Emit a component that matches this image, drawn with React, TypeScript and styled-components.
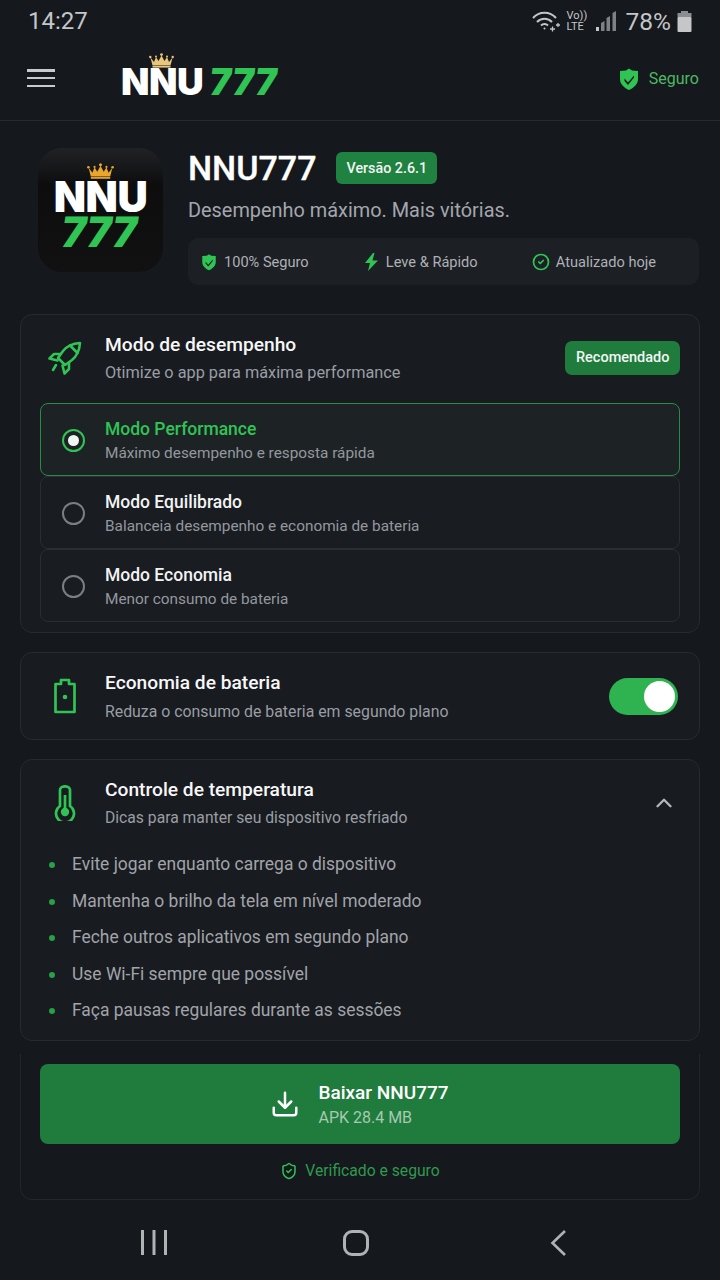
import React from 'react';
import styled, { createGlobalStyle } from 'styled-components';
import { CircleCheck, ChevronUp, Download, ShieldCheck } from 'lucide-react';

const GREEN = '#30c455';

const GlobalStyle = createGlobalStyle`
    html, body {
        margin: 0;
        padding: 0;
        background: #15181d;
    }
    * {
        box-sizing: border-box;
    }
`;

const Crown: React.FC<{ width: number; color: string }> = ({ width, color }) => (
    <svg width={width} height={width * 0.6} viewBox="0 0 25 15" fill={color}>
        <circle cx="12.5" cy="1.6" r="1.4" />
        <circle cx="1.3" cy="4" r="1.2" />
        <circle cx="23.7" cy="4" r="1.2" />
        <circle cx="7" cy="3.6" r="1" />
        <circle cx="18" cy="3.6" r="1" />
        <path d="M1.5 4.5 L5 9 L7 4 L9.5 8 L12.5 2.5 L15.5 8 L18 4 L20 9 L23.5 4.5 L21.5 12.5 H3.5 Z" />
        <rect x="3.5" y="13" width="18" height="1.6" />
    </svg>
);

const ShieldSolid: React.FC<{ size: number }> = ({ size }) => (
    <svg width={size} height={size} viewBox="0 0 24 24">
        <path d="M12 1.5 L15 3.6 L21 4 V12 C21 17.5 16.5 21 12 23 C7.5 21 3 17.5 3 12 V4 L9 3.6 Z" fill={GREEN} />
        <path d="M7.5 11.5 L11 15.5 L17 8.5 L17 10.5 L11 18 L7.5 14 Z" fill="#15181d" />
    </svg>
);

const modes = [
    { title: 'Modo Performance', desc: 'Máximo desempenho e resposta rápida', active: true },
    { title: 'Modo Equilibrado', desc: 'Balanceia desempenho e economia de bateria', active: false },
    { title: 'Modo Economia', desc: 'Menor consumo de bateria', active: false },
];

const tips = [
    'Evite jogar enquanto carrega o dispositivo',
    'Mantenha o brilho da tela em nível moderado',
    'Feche outros aplicativos em segundo plano',
    'Use Wi-Fi sempre que possível',
    'Faça pausas regulares durante as sessões',
];

const App: React.FC = () => {
    return (
        <Page>
            <GlobalStyle />
            <StatusBar>
                <Clock>14:27</Clock>
                <StatusRight>
                    <svg width="30" height="22" viewBox="0 0 30 22" fill="none" stroke="#c4c6c8" strokeWidth="2">
                        <path d="M2 8 C8 1 19 1 25 8" />
                        <path d="M6 12 C10 7.5 17 7.5 21 12" />
                        <path d="M10 15.5 C12 13.5 15 13.5 17 15.5" />
                        <circle cx="13.5" cy="18.5" r="1" fill="#c4c6c8" stroke="none" />
                        <path d="M19 19 h5 M21.5 16.5 v5 M25 15 h4 M27 13 v4" strokeWidth="1.3" />
                    </svg>
                    <VolteLabel>Vo))<br />LTE</VolteLabel>
                    <svg width="22" height="20" viewBox="0 0 22 20" fill="#7f8285">
                        <rect x="1" y="16" width="3" height="4" fill="#c4c6c8" />
                        <path d="M6 12 L9.5 10 V20 H6 Z" />
                        <path d="M11.5 7 L15 5 V20 H11.5 Z" />
                        <path d="M17.5 2 L21 0 V20 H17.5 Z" />
                    </svg>
                    <Percent>78%</Percent>
                    <svg width="15" height="21" viewBox="0 0 15 21">
                        <rect x="4" y="0" width="7" height="3" fill="#8b8e91" />
                        <rect x="0.5" y="2" width="14" height="4" fill="#8b8e91" />
                        <rect x="0.5" y="6" width="14" height="15" rx="1" fill="#c4c6c8" />
                    </svg>
                </StatusRight>
            </StatusBar>

            <Header>
                <Burger><span /><span /><span /></Burger>
                <HeaderLogo>
                    <CrownSpot><Crown width={25} color="#e9c67c" /></CrownSpot>
                    <LogoWhite>NNU</LogoWhite><LogoGreen>777</LogoGreen>
                </HeaderLogo>
                <SafeTag>
                    <ShieldSolid size={24} />
                    <span>Seguro</span>
                </SafeTag>
            </Header>

            <Hero>
                <AppIcon>
                    <Crown width={27} color="#e9a62c" />
                    <IconWhite>NNU</IconWhite>
                    <IconGreen>777</IconGreen>
                </AppIcon>
                <HeroBody>
                    <TitleRow>
                        <AppTitle>NNU777</AppTitle>
                        <Pill>Versão 2.6.1</Pill>
                    </TitleRow>
                    <Tagline>Desempenho máximo. Mais vitórias.</Tagline>
                    <Features>
                        <Feature><ShieldSolid size={18} />100% Seguro</Feature>
                        <Feature>
                            <svg width="17" height="18" viewBox="0 0 17 18" fill={GREEN}>
                                <path d="M10 0 L2 10 H7 L5 18 L15 7.5 H9.5 L11.5 0 Z" />
                            </svg>
                            Leve &amp; Rápido
                        </Feature>
                        <Feature><CircleCheck size={18} color={GREEN} strokeWidth={2.3} />Atualizado hoje</Feature>
                    </Features>
                </HeroBody>
            </Hero>

            <Stack>
                <ModeCard>
                    <ModeHead>
                        <IconSlot>
                            <svg width="34" height="34" viewBox="0 0 34 34" fill="none" stroke={GREEN} strokeWidth="2.6" strokeLinejoin="round" strokeLinecap="round">
                                <path d="M32 2 C25 2.5 19 5 15 10 L10 17 L17 24 L24 19 C29 15 31.5 9 32 2 Z" />
                                <path d="M22 4.5 L29.5 12" />
                                <path d="M12.5 13 H6 L1.5 17.5 L9.5 19.5" />
                                <path d="M21 21.5 V28 L16.5 32.5 L14.5 24.5" />
                                <path d="M8 24 L5 29" />
                            </svg>
                        </IconSlot>
                        <HeadText>
                            <CardTitle>Modo de desempenho</CardTitle>
                            <ModeHeadDesc>Otimize o app para máxima performance</ModeHeadDesc>
                        </HeadText>
                        <Recommended>Recomendado</Recommended>
                    </ModeHead>
                    <ModeList>
                        {modes.map((mode) => (
                            <ModeRow key={mode.title} $active={mode.active}>
                                <Radio $active={mode.active} />
                                <div>
                                    <ModeTitle $active={mode.active}>{mode.title}</ModeTitle>
                                    <ModeDesc>{mode.desc}</ModeDesc>
                                </div>
                            </ModeRow>
                        ))}
                    </ModeList>
                </ModeCard>

                <BatteryCard>
                    <IconSlot>
                        <svg width="24" height="36" viewBox="0 0 24 36" fill="none" stroke={GREEN} strokeWidth="2.7" strokeLinejoin="round">
                            <path d="M2.5 6 H8 V2 H16 V6 H21.5 V34 H2.5 Z" />
                            <circle cx="12" cy="19" r="2.3" fill={GREEN} stroke="none" />
                        </svg>
                    </IconSlot>
                    <HeadText>
                        <CardTitle>Economia de bateria</CardTitle>
                        <BatteryDesc>Reduza o consumo de bateria em segundo plano</BatteryDesc>
                    </HeadText>
                    <Toggle><Knob /></Toggle>
                </BatteryCard>

                <TempCard>
                    <TempHead>
                        <IconSlot>
                            <svg width="24" height="36" viewBox="0 0 24 36" fill="none" stroke={GREEN} strokeWidth="2.7">
                                <path d="M7 5 a5 3.7 0 0 1 10 0 V21 a9 9 0 1 1 -10 0 Z" />
                                <path d="M12 10 V26" />
                                <circle cx="12" cy="27" r="4.2" fill={GREEN} stroke="none" />
                            </svg>
                        </IconSlot>
                        <HeadText>
                            <CardTitle>Controle de temperatura</CardTitle>
                            <TempDesc>Dicas para manter seu dispositivo resfriado</TempDesc>
                        </HeadText>
                        <ChevronSlot><ChevronUp size={26} color="#b4b6b9" strokeWidth={2.2} /></ChevronSlot>
                    </TempHead>
                    <TipList>
                        {tips.map((tip) => (
                            <Tip key={tip}>{tip}</Tip>
                        ))}
                    </TipList>
                </TempCard>
            </Stack>

            <DownloadPanel>
                <DownloadButton>
                    <Download size={30} color="#fff" strokeWidth={2} />
                    <div>
                        <DownloadTitle>Baixar NNU777</DownloadTitle>
                        <DownloadSize>APK 28.4 MB</DownloadSize>
                    </div>
                </DownloadButton>
                <Verified>
                    <ShieldCheck size={18} color={GREEN} strokeWidth={2} />
                    Verificado e seguro
                </Verified>
            </DownloadPanel>

            <NavBar>
                <svg width="28" height="26" viewBox="0 0 28 26" fill="#b0b2b4">
                    <rect x="1" y="0" width="3" height="25" />
                    <rect x="12.5" y="0" width="3" height="25" />
                    <rect x="24" y="0" width="3" height="25" />
                </svg>
                <HomeKey />
                <svg width="18" height="28" viewBox="0 0 18 28" fill="none" stroke="#b0b2b4" strokeWidth="2.6">
                    <path d="M15 2 L2.5 14 L15 26" />
                </svg>
            </NavBar>
        </Page>
    );
};

const Page = styled.div`
    width: 720px;
    height: 1280px;
    overflow: hidden;
    background: #15181d;
    font-family: Roboto, "Noto Sans", sans-serif;
    color: #fff;
`;

const StatusBar = styled.div`
    height: 40px;
    padding: 2px 28px 0 28px;
    display: flex;
    align-items: center;
    justify-content: space-between;
`;

const Clock = styled.div`
    font-size: 24px;
    color: #c4c6c8;
`;

const StatusRight = styled.div`
    display: flex;
    align-items: center;
    gap: 4px;
`;

const VolteLabel = styled.div`
    margin-left: 2px;
    width: 24px;
    font-size: 11px;
    line-height: 11px;
    color: #c4c6c8;
`;

const Percent = styled.div`
    font-size: 24.5px;
    color: #c4c6c8;
    margin: 0 2px 0 5px;
`;

const Header = styled.header`
    height: 81px;
    padding: 0 21px 4px 27px;
    display: flex;
    align-items: center;
    border-bottom: 1px solid #272a2f;
`;

const Burger = styled.div`
    width: 28px;
    height: 18px;
    display: flex;
    flex-direction: column;
    justify-content: space-between;

    span {
        height: 2.5px;
        background: #c8cacc;
    }
`;

const HeaderLogo = styled.div`
    position: relative;
    margin-left: 66px;
    margin-top: 6px;
    font-family: Inter, "Liberation Sans", sans-serif;
    font-size: 37px;
    line-height: 37px;
    font-weight: 900;
    flex: 1;
    letter-spacing: -0.5px;
`;

const CrownSpot = styled.div`
    position: absolute;
    left: 28px;
    top: -10px;
    line-height: 0;
`;

const LogoWhite = styled.span`
    color: #fff;
`;

const LogoGreen = styled.span`
    display: inline-block;
    color: ${GREEN};
    transform: skewX(-7deg);
    margin-left: 7px;
    letter-spacing: 0;
`;

const SafeTag = styled.div`
    display: flex;
    align-items: center;
    gap: 8px;
    font-size: 16px;
    color: #4cb863;
    padding-top: 1px;
`;

const Hero = styled.section`
    padding: 27px 21px 0 38px;
    display: flex;
    gap: 25px;
`;

const AppIcon = styled.div`
    width: 125px;
    height: 124px;
    border-radius: 24px;
    background: linear-gradient(180deg, #202225 0%, #0d0d0e 30%, #111112 100%);
    display: flex;
    flex-direction: column;
    align-items: center;
    padding-top: 15px;
    flex-shrink: 0;
    font-family: Inter, "Liberation Sans", sans-serif;
    font-weight: 900;
    font-size: 42px;
    line-height: 35px;
    letter-spacing: -0.5px;
`;

const IconWhite = styled.div`
    color: #fff;
`;

const IconGreen = styled.div`
    color: ${GREEN};
    transform: skewX(-9deg);
    margin-right: 2px;
`;

const HeroBody = styled.div`
    flex: 1;
`;

const TitleRow = styled.div`
    display: flex;
    align-items: center;
    gap: 20px;
    height: 40px;
`;

const AppTitle = styled.h1`
    margin: 0;
    font-size: 34px;
    font-weight: 500;
    -webkit-text-stroke: 0.3px #fff;
`;

const Pill = styled.div`
    height: 32px;
    padding: 0 10px;
    border-radius: 6px;
    background: #1f8240;
    font-size: 14.3px;
    font-weight: 500;
    line-height: 32px;
    color: #f2f5f3;
`;

const Tagline = styled.p`
    margin: 10px 0 0;
    font-size: 19.9px;
    line-height: 26px;
    color: #a3a7ad;
`;

const Features = styled.div`
    margin-top: 14px;
    height: 47px;
    padding: 0 43px 0 12px;
    display: flex;
    align-items: center;
    justify-content: space-between;
    background: #1c1f24;
    border-radius: 10px;
`;

const Feature = styled.div`
    display: flex;
    align-items: center;
    gap: 6px;
    font-size: 14.6px;
    color: #aeb1b5;
`;

const Stack = styled.div`
    padding: 29px 20px 0;
    display: flex;
    flex-direction: column;
    gap: 19px;
`;

const Card = styled.div`
    background: #181b20;
    border: 1px solid #272a30;
    border-radius: 12px;
`;

const ModeCard = styled(Card)`
    height: 319px;
    padding: 10px 19px 0;
`;

const ModeHead = styled.div`
    height: 78px;
    padding-top: 8px;
    display: flex;
    align-items: flex-start;
`;

const IconSlot = styled.div`
    width: 50px;
    height: 50px;
    margin-right: 15px;
    flex-shrink: 0;
    display: flex;
    align-items: center;
    justify-content: center;
`;

const HeadText = styled.div`
    flex: 1;
`;

const CardTitle = styled.div`
    font-size: 19.2px;
    line-height: 24px;
    font-weight: 500;
    color: #f7f7f8;
`;

const CardDesc = styled.div`
    margin-top: 6px;
    font-size: 15.85px;
    line-height: 20px;
    color: #9a9ea4;
`;

const ModeHeadDesc = styled(CardDesc)`
    font-size: 16.3px;
`;

const BatteryDesc = styled(CardDesc)`
    margin-top: 7px;
`;

const TempDesc = styled(CardDesc)`
    font-size: 15.7px;
`;

const Recommended = styled.div`
    margin-top: 8px;
    height: 34px;
    padding: 0 10.5px;
    border-radius: 7px;
    background: #1f7c3d;
    font-size: 14.5px;
    font-weight: 500;
    line-height: 34px;
    color: #f2f5f3;
`;

const ModeList = styled.div`
    display: flex;
    flex-direction: column;
`;

const ModeRow = styled.div<{ $active: boolean }>`
    height: 73px;
    padding: 2px 21px 0;
    display: flex;
    align-items: center;
    gap: 20px;
    border: 1px solid ${(p) => (p.$active ? '#2b8a47' : '#2a2d33')};
    border-radius: 8px;
    background: ${(p) => (p.$active ? '#1d2325' : '#191c21')};
`;

const Radio = styled.div<{ $active: boolean }>`
    width: 23px;
    height: 23px;
    border-radius: 50%;
    flex-shrink: 0;
    border: 2px solid ${(p) => (p.$active ? GREEN : '#7b7e83')};
    display: flex;
    align-items: center;
    justify-content: center;

    &::after {
        content: '';
        display: ${(p) => (p.$active ? 'block' : 'none')};
        width: 11px;
        height: 11px;
        border-radius: 50%;
        background: #eef7f0;
    }
`;

const ModeTitle = styled.div<{ $active: boolean }>`
    font-size: 17.5px;
    line-height: 22px;
    font-weight: 500;
    color: ${(p) => (p.$active ? GREEN : '#f2f3f4')};
`;

const ModeDesc = styled.div`
    margin-top: 3px;
    font-size: 15.35px;
    line-height: 20px;
    color: #94989e;
`;

const BatteryCard = styled(Card)`
    height: 88px;
    padding: 0 21px 0 19px;
    display: flex;
    align-items: center;
`;

const Toggle = styled.div`
    width: 69px;
    height: 37px;
    border-radius: 19px;
    background: #2fb350;
    padding: 3px 3px 3px 35px;
`;

const Knob = styled.div`
    width: 31px;
    height: 31px;
    border-radius: 50%;
    background: #fff;
`;

const TempCard = styled(Card)`
    height: 282px;
    padding: 18px 19px 0;
`;

const TempHead = styled.div`
    display: flex;
    align-items: center;
`;

const ChevronSlot = styled.div`
    margin-right: 3px;
    display: flex;
`;

const TipList = styled.ul`
    list-style: none;
    margin: 18px 0 0;
    padding: 0;
`;

const Tip = styled.li`
    position: relative;
    height: 36.5px;
    padding-left: 32px;
    font-size: 17.45px;
    line-height: 36.5px;
    color: #a1a4a9;

    &::before {
        content: '';
        position: absolute;
        left: 9px;
        top: 16px;
        width: 6px;
        height: 6px;
        border-radius: 50%;
        background: #27a046;
    }
`;

const DownloadPanel = styled.div`
    margin: 13px 20px 0;
    height: 146px;
    padding: 10px 19px 0;
    background: #15181d;
    border: 1px solid #23262b;
    border-top: none;
    border-radius: 0 0 12px 12px;
`;

const DownloadButton = styled.div`
    height: 80px;
    border-radius: 8px;
    background: #1f7c3d;
    display: flex;
    align-items: center;
    justify-content: center;
    gap: 18px;
    padding-right: 1px;
`;

const DownloadTitle = styled.div`
    font-size: 19px;
    line-height: 26px;
    font-weight: 500;
`;

const DownloadSize = styled.div`
    margin-top: 2px;
    font-size: 16px;
    line-height: 20px;
    color: #a7c9b2;
`;

const Verified = styled.div`
    margin-top: 17px;
    display: flex;
    align-items: center;
    justify-content: center;
    gap: 7px;
    font-size: 15.7px;
    color: #2f9a4e;
`;

const NavBar = styled.nav`
    height: 80px;
    padding: 6px 152px 0 140px;
    display: flex;
    align-items: center;
    justify-content: space-between;
`;

const HomeKey = styled.div`
    width: 26px;
    height: 26px;
    margin-right: 6px;
    border-radius: 9px;
    border: 3px solid #b0b2b4;
`;

export default App;
